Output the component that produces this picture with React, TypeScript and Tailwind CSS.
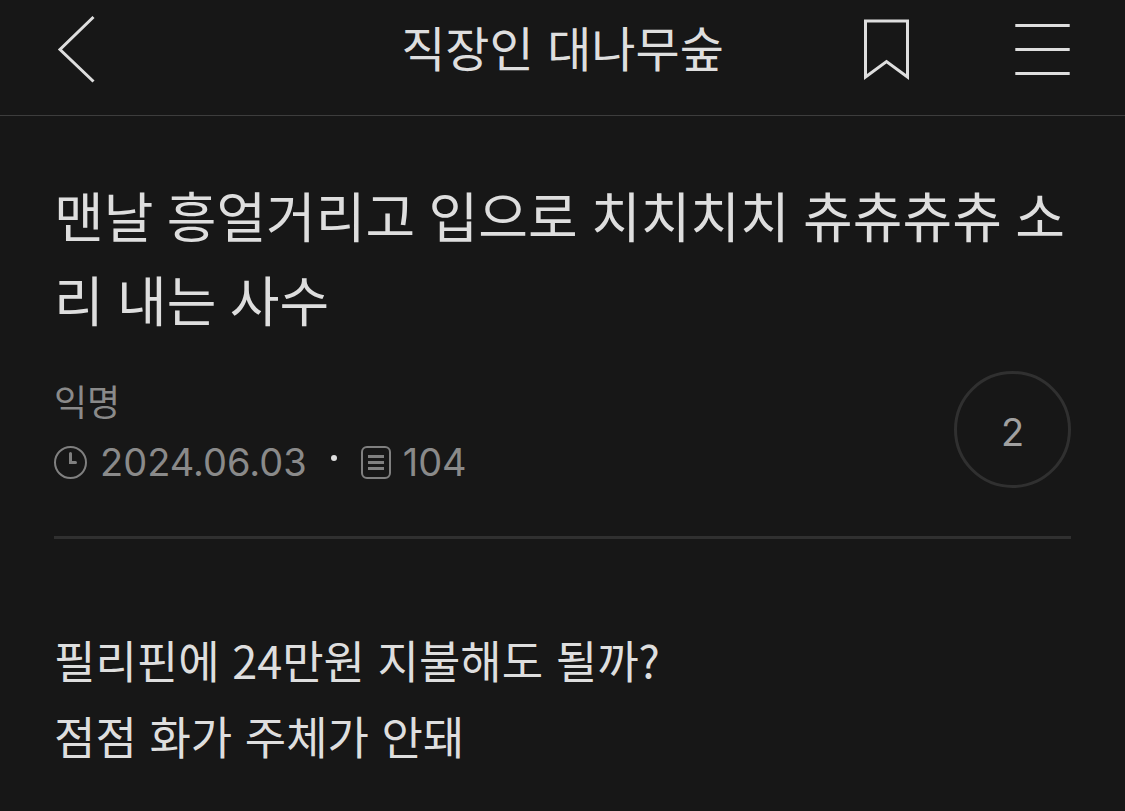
import React from "react";

const iconStroke = "#dedede";

function BackIcon() {
  return (
    <svg width="40" height="70" viewBox="0 0 40 70" fill="none" stroke={iconStroke} strokeWidth="3" aria-hidden="true">
      <path d="M37.500 2 4 34.500 37.500 66.500" />
    </svg>
  );
}

function BookmarkIcon() {
  return (
    <svg width="46" height="62" viewBox="0 0 46 62" fill="none" stroke={iconStroke} strokeWidth="3" aria-hidden="true">
      <path d="M1.500 2H43.500V58L22.500 42.500 1.500 58Z" />
    </svg>
  );
}

function MenuIcon() {
  return (
    <svg width="56" height="54" viewBox="0 0 56 54" fill="none" stroke={iconStroke} strokeWidth="3" aria-hidden="true">
      <path d="M.3 3.500H54.700M.3 27.500H54.700M.3 51.500H54.700" />
    </svg>
  );
}

function ClockIcon() {
  return (
    <svg width="34" height="34" viewBox="0 0 34 34" fill="none" stroke="#808080" strokeWidth="2" aria-hidden="true">
      <circle cx="16.500" cy="17.500" r="15.500" />
      <path d="M16.500 8.500V17.500H21.500" strokeWidth="3" strokeLinecap="round" />
    </svg>
  );
}

function ViewsIcon() {
  return (
    <svg width="30" height="34" viewBox="0 0 30 34" fill="none" stroke="#808080" strokeWidth="2" aria-hidden="true">
      <rect x="1" y="2" width="28" height="31" rx="5" />
      <path d="M7 11.500H23M7 17.500H23M7 23.500H23" strokeWidth="3" />
    </svg>
  );
}

export default function App() {
  return (
    <div className="min-h-screen bg-[#171717] font-[Inter,'Noto_Sans_CJK_KR',sans-serif] text-[#dedede]" lang="ko">
      <header className="grid h-[116px] grid-cols-[1fr_auto_1fr] items-start border-b border-[#3d3d3d] px-[54px]">
        <button type="button" aria-label="뒤로" className="mt-[15px] ml-[2px] w-fit">
          <BackIcon />
        </button>
        <h1 className="mt-[16px] text-[48px] leading-[68px] font-normal">직장인 대나무숲</h1>
        <div className="flex items-start justify-end gap-[105px]">
          <button type="button" aria-label="북마크" className="mt-[19px]">
            <BookmarkIcon />
          </button>
          <button type="button" aria-label="메뉴" className="mt-[22px]">
            <MenuIcon />
          </button>
        </div>
      </header>
      <main className="px-[54px] pt-[62px]">
        <article>
          <h2 className="font-[Roboto,'Noto_Sans_CJK_KR',sans-serif] text-[54px] leading-[84px] font-normal break-all">
            맨날 흥얼거리고 입으로 치치치치 츄츄츄츄 소리 내는 사수
          </h2>
          <div className="flex items-start justify-between border-b-[3px] border-[#303030] pt-[25px] pb-[47px]">
            <div className="text-[#8a8a8a]">
              <p className="mt-2 text-[36px] leading-[48px]">익명</p>
              <div className="mt-2 flex items-center text-[38px] leading-[54px]">
                <ClockIcon />
                <time dateTime="2024-06-03" className="ml-3">2024.06.03</time>
                <span className="mx-[24px] mb-[9px] size-[6px] rounded-full bg-[#dedede]" />
                <ViewsIcon />
                <span className="ml-3">104</span>
              </div>
            </div>
            <button type="button" aria-label="댓글 2개" className="size-[117px] rounded-full border-[3px] border-[#303030] pt-1 text-[38px] leading-[54px] text-[#a0a0a0]">
              2
            </button>
          </div>
          <div className="pt-[83px] font-['Noto_Sans_CJK_KR',sans-serif] text-[45px] leading-[76px]">
            <p>필리핀에 24만원 지불해도 될까?</p>
            <p>점점 화가 주체가 안돼</p>
          </div>
        </article>
      </main>
    </div>
  );
}
